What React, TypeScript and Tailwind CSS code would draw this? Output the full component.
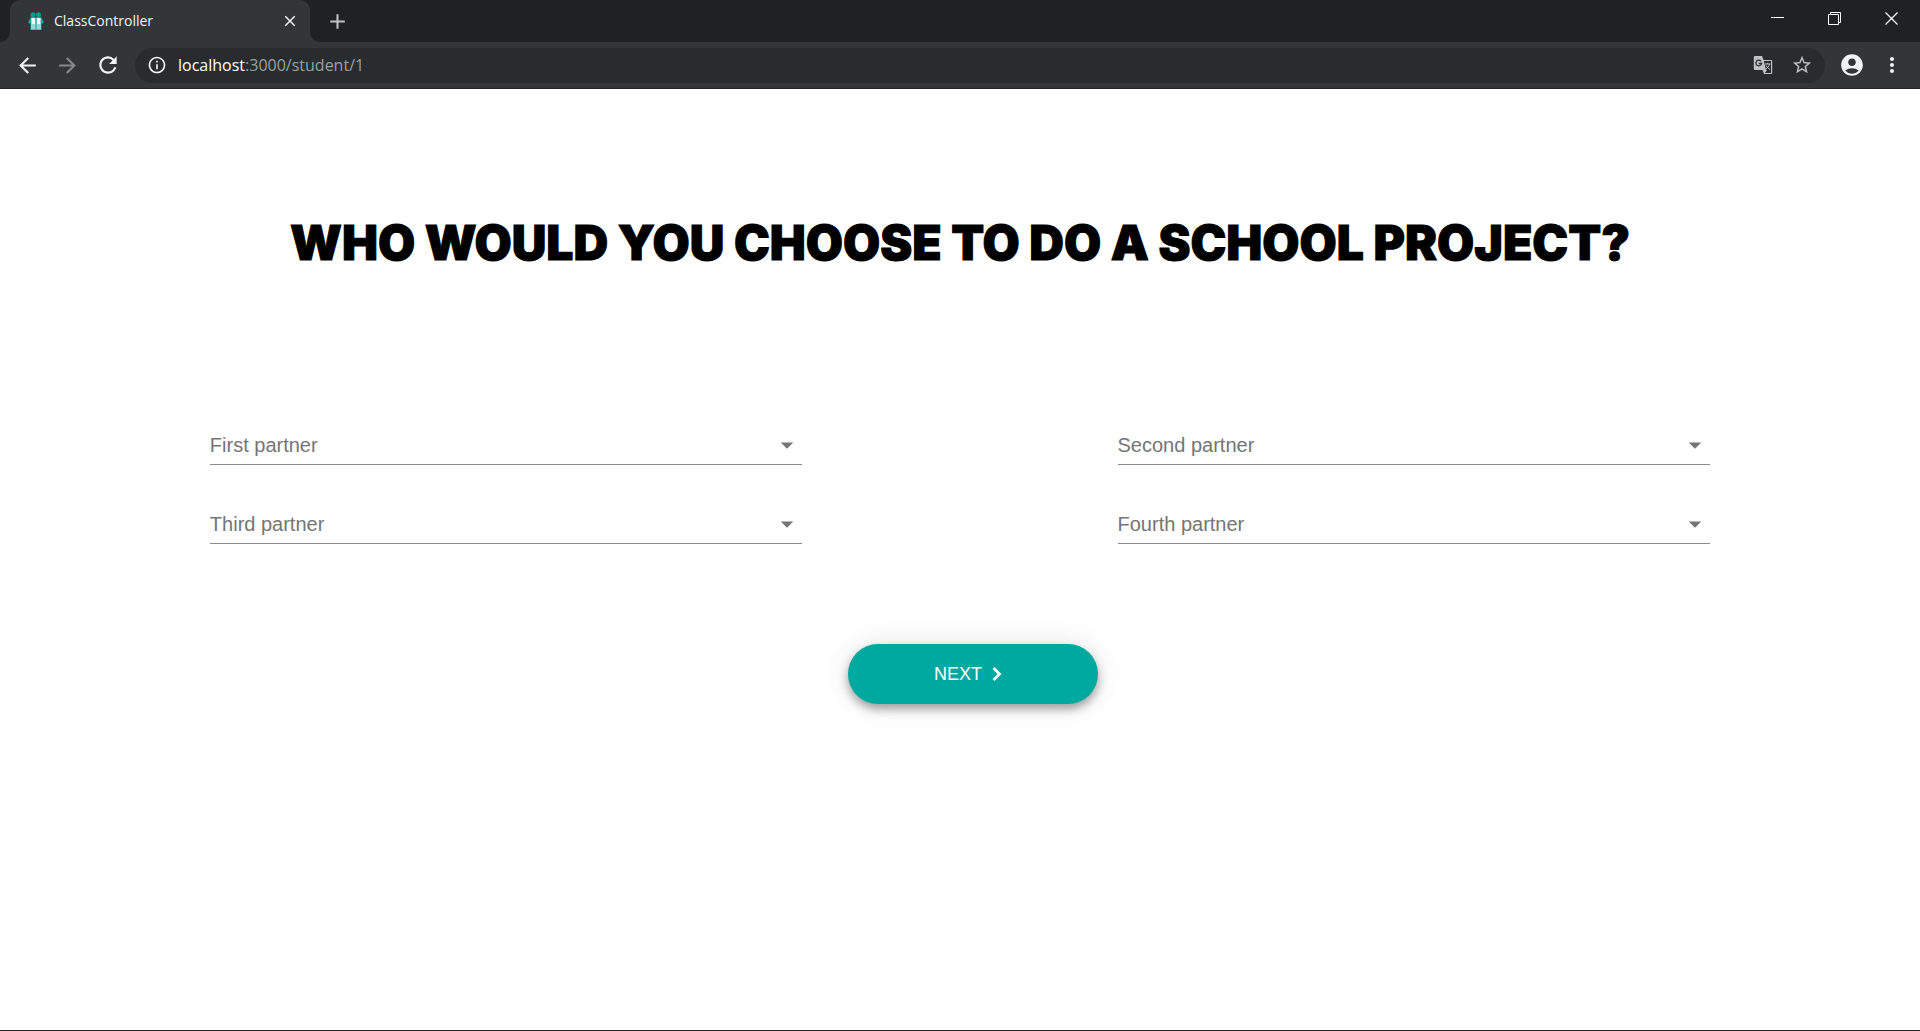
import React from "react";
import {
  MdAccountCircle,
  MdAdd,
  MdArrowBack,
  MdArrowDropDown,
  MdArrowForward,
  MdClose,
  MdInfoOutline,
  MdMoreVert,
  MdRefresh,
  MdStarBorder,
} from "react-icons/md";

const partners = [
  { id: "first", label: "First partner" },
  { id: "second", label: "Second partner" },
  { id: "third", label: "Third partner" },
  { id: "fourth", label: "Fourth partner" },
];

function Favicon() {
  return (
    <svg viewBox="0 0 16 18" className="h-[18px] w-4 shrink-0" aria-hidden="true">
      <circle cx="5" cy="2.800" r="2.500" fill="#0b9c8f" />
      <circle cx="10.500" cy="2.800" r="2.500" fill="#0b9c8f" />
      <path d="M3 5h10l3 5.500-2.500 1.500V18H2.500v-6L0 10.500z" fill="#12a396" />
      <path d="M3 6h4.500v11.500H3zM8.500 6H13v11.500H8.500z" fill="#8fdcd4" />
      <path d="M4 6h2.800v6H4zM9.200 6H12v6H9.200z" fill="#effffd" />
    </svg>
  );
}

function TranslateIcon() {
  return (
    <svg viewBox="0 0 20 20" className="size-5" fill="none" aria-hidden="true">
      <path d="M2 1h7l1.500 4H18a1.200 1.200 0 0 1 1.200 1.200v11.600A1.200 1.200 0 0 1 18 19h-7l-1.500-4H2A1.200 1.200 0 0 1 .8 13.800V2.200A1.200 1.200 0 0 1 2 1z" fill="#bdc1c6" />
      <path d="M10.900 6h7.100v12h-6l2-3h-1z" fill="#282c2f" />
      <path d="M8 6.300A2.800 2.800 0 1 0 8.500 8.500H5.800" stroke="#282c2f" strokeWidth="1.300" />
      <path d="M12 9h5.500M14.700 7.800V9M16.500 9c-.5 2.200-2 4-3.500 5M13 10.500c.8 1.600 2.300 3 4 4" stroke="#bdc1c6" />
    </svg>
  );
}

function TabStrip() {
  return (
    <div className="flex h-[42px] items-stretch bg-[#202124]">
      <div className="w-[10px] bg-[#323639]">
        <div className="h-full rounded-br-[10px] bg-[#202124]" />
      </div>
      <div className="flex w-[300px] items-center rounded-t-[10px] bg-[#323639] pr-[11px] pl-[18px]">
        <Favicon />
        <span className="ml-[10px] flex-1 font-['Open_Sans','Noto_Sans',sans-serif] text-[14px] leading-5 text-[#f1f3f4]">
          ClassController
        </span>
        <button type="button" aria-label="Close tab" className="text-[#f1f3f4]">
          <MdClose size={18} />
        </button>
      </div>
      <div className="w-[10px] bg-[#323639]">
        <div className="h-full rounded-bl-[10px] bg-[#202124]" />
      </div>
      <button type="button" aria-label="New tab" className="ml-[5px] text-[#bdc1c6]">
        <MdAdd size={25} />
      </button>
      <div className="ml-auto flex text-white">
        <button type="button" aria-label="Minimize" className="flex w-[57px] items-center justify-center pb-[7px]">
          <svg viewBox="0 0 13 13" className="size-[13px]">
            <path d="M0 6.500h13" stroke="currentColor" />
          </svg>
        </button>
        <button type="button" aria-label="Restore" className="flex w-[57px] items-center justify-center pb-[5px]">
          <svg viewBox="0 0 13 13" className="size-[13px]" fill="none" stroke="currentColor">
            <path d="M.5 2.500h10v10H.5zM2.500 2.500v-2h10v10h-2" />
          </svg>
        </button>
        <button type="button" aria-label="Close" className="flex w-[57px] items-center justify-center pb-[5px]">
          <svg viewBox="0 0 13 13" className="size-[13px]" stroke="currentColor">
            <path d="M.5.5l12 12M12.500.5l-12 12" strokeWidth="1.200" />
          </svg>
        </button>
      </div>
    </div>
  );
}

function Toolbar() {
  return (
    <div className="flex h-[47px] items-center border-b border-[#232527] bg-[#323639] pr-4 pl-[15px] text-[#f1f3f4]">
      <button type="button" aria-label="Back">
        <MdArrowBack size={25} />
      </button>
      <button type="button" aria-label="Forward" className="ml-[15px] text-[#86898c]">
        <MdArrowForward size={25} />
      </button>
      <button type="button" aria-label="Reload" className="ml-[15px]">
        <MdRefresh size={26} />
      </button>
      <div className="ml-[14px] flex h-[35px] flex-1 items-center rounded-full bg-[#282c2f] pr-3 pl-3 font-['Open_Sans','Noto_Sans',sans-serif] text-[16px]">
        <MdInfoOutline size={20} />
        <a href="#address" className="ml-[11px] flex-1 leading-6 text-[#9aa0a6]">
          <span className="text-white">localhost</span>:3000/student/1
        </a>
        <button type="button" aria-label="Translate this page">
          <TranslateIcon />
        </button>
        <button type="button" aria-label="Bookmark this page" className="ml-[18px] text-[#bdc1c6]">
          <MdStarBorder size={22} />
        </button>
      </div>
      <button type="button" aria-label="Profile" className="ml-[14px]">
        <MdAccountCircle size={26} />
      </button>
      <button type="button" aria-label="Menu" className="ml-[15px]">
        <MdMoreVert size={24} />
      </button>
    </div>
  );
}

function PartnerSelect({ id, label }: { id: string; label: string }) {
  return (
    <div className="relative flex h-[39px] items-center border-b border-[#8c8c8c] text-[#757575]">
      <label htmlFor={id} className="pointer-events-none flex-1 text-[20px] leading-6">
        {label}
      </label>
      <MdArrowDropDown size={30} className="pointer-events-none" />
      <select id={id} defaultValue="" className="absolute inset-0 w-full cursor-pointer appearance-none bg-transparent">
        <option value="" />
      </select>
    </div>
  );
}

export default function App() {
  return (
    <div className="flex min-h-screen flex-col border-b border-[#232323] bg-white font-['Liberation_Sans',Arial,sans-serif]">
      <header>
        <TabStrip />
        <Toolbar />
      </header>
      <main className="flex flex-1 flex-col px-[10.93%] pt-[124px]">
        <h1 className="text-center font-['Inter',sans-serif] text-[48px] leading-[60px] font-black whitespace-nowrap text-black uppercase [-webkit-text-stroke:1px_black]">
          Who would you choose to do a school project?
        </h1>
        <form className="mt-[153px] flex flex-col" onSubmit={(e) => e.preventDefault()}>
          <div className="grid grid-cols-2 gap-x-[21%] gap-y-10">
            {partners.map((p) => (
              <PartnerSelect key={p.id} id={p.id} label={p.label} />
            ))}
          </div>
          <button
            type="submit"
            className="mt-[100px] ml-[26px] flex h-[60px] w-[250px] items-center justify-center gap-[10px] self-center rounded-full bg-[#00a99f] pr-[10px] text-[18px] text-white shadow-[0_5px_10px_rgba(0,0,0,0.35),0_0_30px_rgba(0,0,0,0.1)]"
          >
            NEXT
            <svg viewBox="0 0 10 14" className="h-[14px] w-[10px]" fill="none" stroke="currentColor" strokeWidth="2.800">
              <path d="M1.500 1l6 6-6 6" />
            </svg>
          </button>
        </form>
      </main>
    </div>
  );
}
